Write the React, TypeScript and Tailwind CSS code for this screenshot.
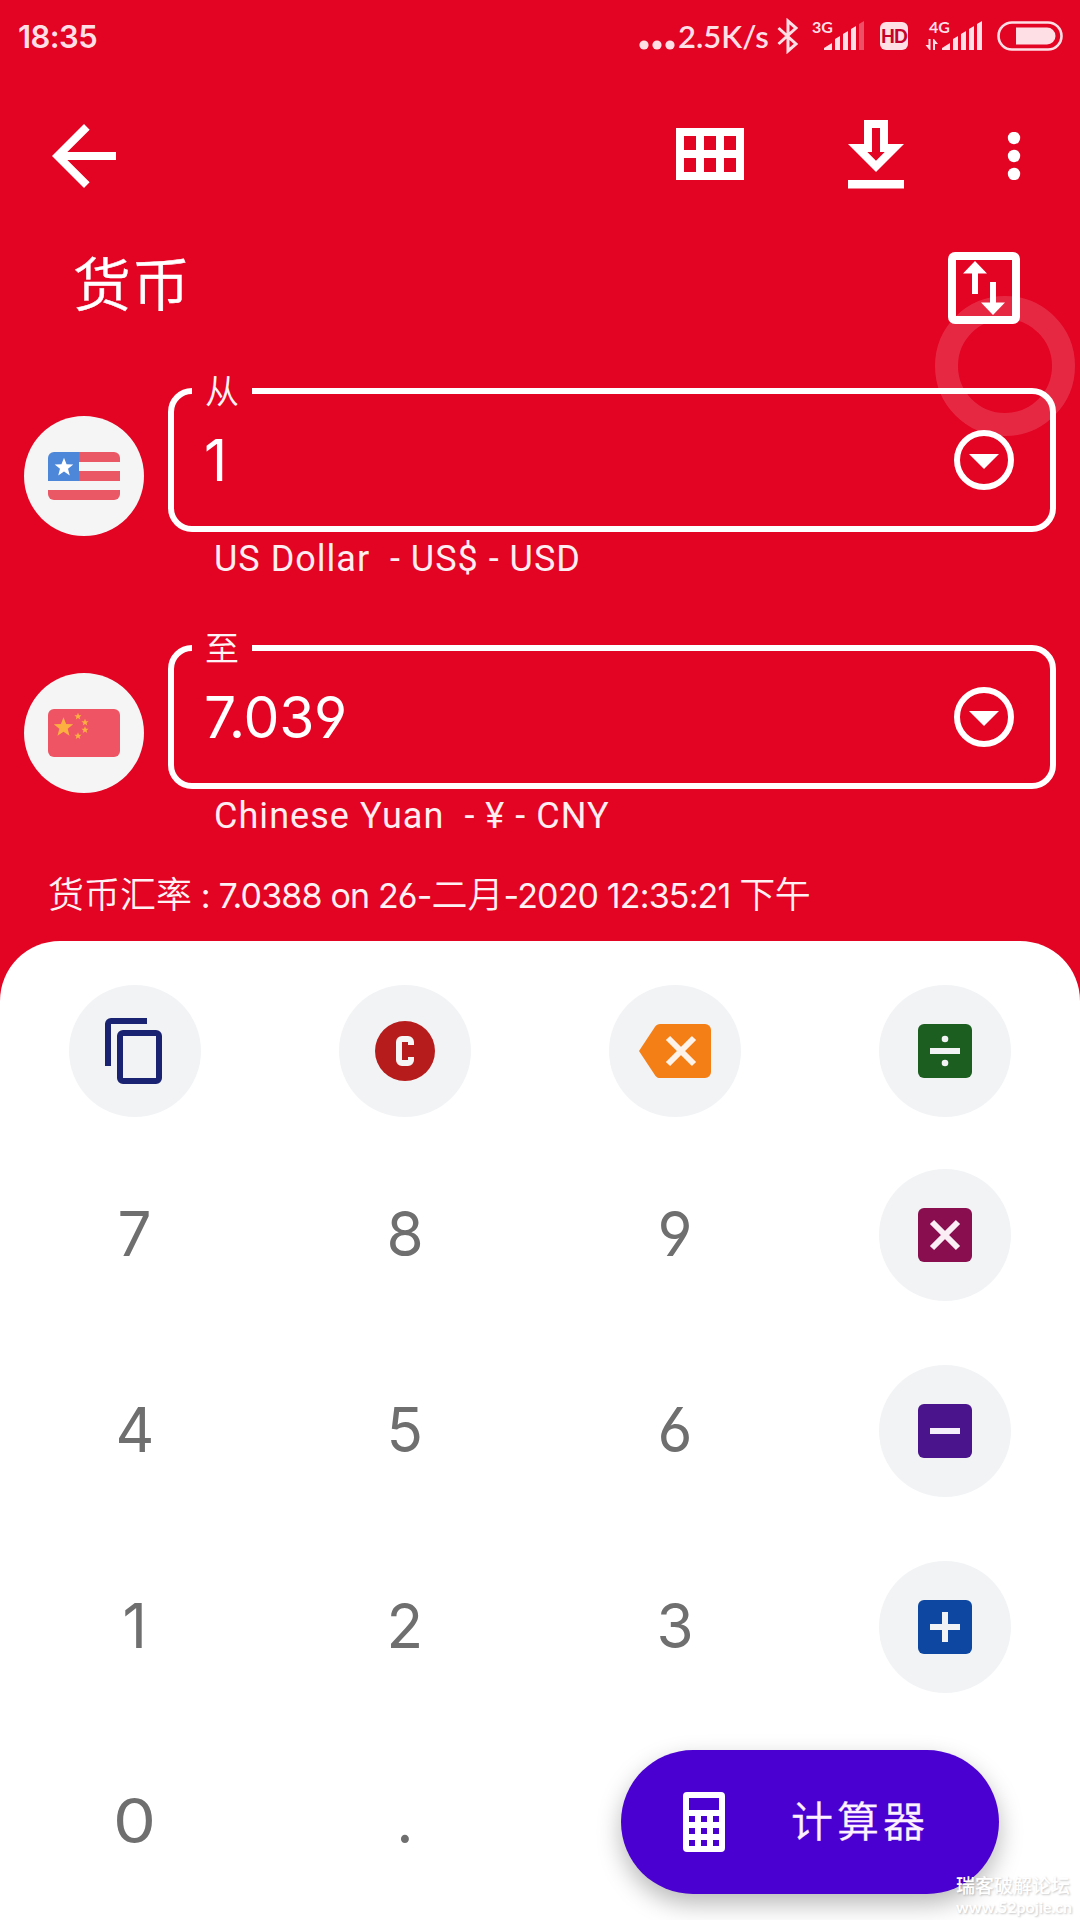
import type { ReactNode } from "react";
import { MdArrowBack } from "react-icons/md";

type FieldProps = {
  label: string;
  value: string;
  unit: string;
  flag: ReactNode;
  unitClass: string;
};

const STAR = "M0-10 2.6-3.4 9.5-3.1 4.1 1.2 5.9 8.1 0 4.2-5.9 8.1-4.1 1.2-9.5-3.1-2.6-3.4Z";

function StatusBar() {
  return (
    <div className="flex h-[72px] shrink-0 items-center justify-between pl-[18px] pr-[17px] text-[#ffdfe6]">
      <span className="mt-[2px] font-[Inter] text-[31px] font-semibold tracking-[-0.6px]">
        18:35
      </span>
      <div className="flex items-center">
        <svg className="mt-[18px] h-[10px] w-9" viewBox="0 0 36 10" fill="currentColor">
          <circle cx="5" cy="5" r="4.6" />
          <circle cx="18" cy="5" r="4.6" />
          <circle cx="31" cy="5" r="4.6" />
        </svg>
        <span className="ml-[3px] w-[96px] whitespace-nowrap font-[Lato] text-[31px] font-semibold">
          2.5K/s
        </span>
        <svg
          className="ml-[3px] h-9 w-[22px]"
          viewBox="0 0 22 36"
          fill="none"
          stroke="currentColor"
          strokeWidth="3"
        >
          <path d="M1.5 10 19 26 11 33V3l8 7L1.5 26" />
        </svg>
        <div className="ml-[13px] flex h-9 w-[54px]">
          <span className="-mt-[1px] w-3 font-[Lato] text-[16px] font-bold leading-[20px]">3G</span>
          <svg className="h-9 w-[42px]" viewBox="12 0 42 36" fill="currentColor">
            <path d="M12 32v-2l8-5v7zM23 32V21l5-3v14zM31 32V16l5-3v19zM39 32V11l5-3v24z" />
            <path d="M47 32V6l5-3v29z" opacity=".35" />
          </svg>
        </div>
        <div className="ml-[14px] flex h-[28px] w-[28px] items-center justify-center rounded-[6px] bg-[#ffdfe6] font-[Lato] text-[18px] font-black leading-none tracking-[-0.8px] text-[#c3032c]">
          HD
        </div>
        <div className="relative ml-[16px] h-9 w-[58px]">
          <span className="absolute -top-[1px] left-[5px] font-[Lato] text-[16px] font-bold leading-[20px] text-[#ffdfe6]">
            4G
          </span>
          <svg className="h-9 w-[58px]" viewBox="0 0 58 36" fill="currentColor">
            <path d="M4.5 21h2v11h-1l-4-5h3zM9 21h1l4 5h-3v6H9z" />
            <path d="M18 32v-2l8-5v7zM29 32V21l5-3v14zM37 32V16l5-3v19zM45 32V11l5-3v24zM53 32V6l5-3v29z" />
          </svg>
        </div>
        <svg className="ml-[15px] h-[30px] w-[66px]" viewBox="0 0 66 30">
          <rect x="1.5" y="1.5" width="63" height="27" rx="13.5" fill="none" stroke="currentColor" strokeWidth="2.6" />
          <path d="M19 6.5h31a8.5 8.5 0 0 1 0 17H19z" fill="currentColor" />
        </svg>
      </div>
    </div>
  );
}

function Toolbar() {
  return (
    <div className="mt-9 flex h-24 shrink-0 items-center pl-[36px] pr-[42px] text-white">
      <MdArrowBack className="h-24 w-24" />
      <svg className="ml-auto mb-1 h-[52px] w-[68px]" viewBox="0 0 68 52" fill="currentColor">
        <path
          fillRule="evenodd"
          d="M0 0h68v52H0zM8 8v14h12V8zM28 8v14h12V8zM48 8v14h12V8zM8 30v14h12V30zM28 30v14h12V30zM48 30v14h12V30z"
        />
      </svg>
      <svg className="ml-[84px] h-24 w-24" viewBox="0 0 24 24" fill="currentColor">
        <path d="M19 9h-4V3H9v6H5l7 7 7-7zm-8 2V5h2v6h1.17L12 13.17 9.83 11H11zM5 18h14v2.1H5z" />
      </svg>
      <svg className="ml-[66px] h-12 w-12" viewBox="0 0 48 48" fill="currentColor">
        <circle cx="24" cy="6" r="6.2" />
        <circle cx="24" cy="24" r="6.2" />
        <circle cx="24" cy="42" r="6.2" />
      </svg>
    </div>
  );
}

function UsFlag() {
  return (
    <svg className="h-12 w-[72px]" viewBox="0 0 72 48">
      <clipPath id="us">
        <rect width="72" height="48" rx="6" />
      </clipPath>
      <g clipPath="url(#us)">
        <path fill="#f5f5f5" d="M0 0h72v48H0z" />
        <path fill="#ea5765" d="M30 0h42v10H30zM30 19h42v10H30zM0 38h72v10H0z" />
        <path fill="#4c87d9" d="M0 0h31v29H0z" />
      </g>
      <path d={STAR} fill="#fff" transform="translate(16 15.5) scale(.98)" />
    </svg>
  );
}

function CnFlag() {
  return (
    <svg className="h-12 w-[72px]" viewBox="0 0 72 48">
      <rect width="72" height="48" rx="6" fill="#ee5464" />
      <g fill="#fbb040">
        <path d={STAR} transform="translate(15.5 18.5) scale(1.02)" />
        <path d={STAR} transform="translate(30 7.5) scale(.38)" />
        <path d={STAR} transform="translate(37 13.5) scale(.38)" />
        <path d={STAR} transform="translate(37 21) scale(.38)" />
        <path d={STAR} transform="translate(30 27) scale(.38)" />
      </g>
    </svg>
  );
}

function CurrencyField({ label, value, unit, flag, unitClass }: FieldProps) {
  return (
    <div className="flex h-[257px] items-start pl-6 pr-6">
      <div className="mt-7 flex h-[120px] w-[120px] items-center justify-center rounded-full bg-[#f5f5f5]">
        {flag}
      </div>
      <div className="ml-6 flex-1">
        <div className="relative flex h-36 items-center justify-between rounded-[24px] border-[6px] border-white pl-[30px] pr-[36px]">
          <span className="absolute -top-[24px] left-[18px] flex h-10 w-[60px] items-center justify-center bg-[#e30322] font-['Noto_Sans_CJK_SC',sans-serif] text-[34px] font-[350] leading-none text-[#fff3f6]">
            {label}
          </span>
          <span className="font-[Inter] text-[57px] leading-none tracking-[-0.3px] text-white [font-feature-settings:'cv03','cv04']">
            {value}
          </span>
          <svg className="h-[60px] w-[60px]" viewBox="0 0 60 60">
            <circle cx="30" cy="30" r="27" fill="none" stroke="#fff" strokeWidth="6" />
            <path d="M15 24h30L30 39z" fill="#fff" />
          </svg>
        </div>
        <p
          className={`ml-[46px] mt-[5px] whitespace-pre font-[Roboto] text-[36px] leading-[44px] text-[#ffedf1] ${unitClass}`}
        >
          {unit}
        </p>
      </div>
    </div>
  );
}

function KeyIcon({ color, children }: { color: string; children: ReactNode }) {
  return (
    <div className="flex h-[132px] w-[132px] items-center justify-center rounded-full bg-[#f1f3f5]">
      <svg className="h-[72px] w-[72px]" viewBox="0 0 72 72" fill={color}>
        {children}
      </svg>
    </div>
  );
}

const box = <rect x="9" y="9" width="54" height="54" rx="6" />;

const keys: { id: string; icon?: ReactNode }[][] = [
  [
    {
      id: "copy",
      icon: (
        <KeyIcon color="#1a2272">
          <path d="M48 3H12a6 6 0 0 0-6 6v42h6V9h36zm9 12H24a6 6 0 0 0-6 6v42a6 6 0 0 0 6 6h33a6 6 0 0 0 6-6V21a6 6 0 0 0-6-6zm0 48H24V21h33z" />
        </KeyIcon>
      ),
    },
    {
      id: "clear",
      icon: (
        <KeyIcon color="#b71c1c">
          <circle cx="36" cy="36" r="30" />
          <path
            d="M42 30v-3a3 3 0 0 0-3-3h-6a3 3 0 0 0-3 3v18a3 3 0 0 0 3 3h6a3 3 0 0 0 3-3v-3"
            fill="none"
            stroke="#f5f5f5"
            strokeWidth="6"
          />
        </KeyIcon>
      ),
    },
    {
      id: "backspace",
      icon: (
        <KeyIcon color="#f57f17">
          <path d="M66 9H21c-2 0-3.7 1-4.8 2.6L0 36l16.200 24.400C17.300 62 19 63 21 63h45a6 6 0 0 0 6-6V15a6 6 0 0 0-6-6z" />
          <path d="m29 23 26 26m0-26L29 49" stroke="#fdf3ea" strokeWidth="6" />
        </KeyIcon>
      ),
    },
    {
      id: "divide",
      icon: (
        <KeyIcon color="#1b5e20">
          {box}
          <path d="M21 36h30" stroke="#f1f3f5" strokeWidth="6" />
          <circle cx="36" cy="24" r="3.3" fill="#f1f3f5" />
          <circle cx="36" cy="48" r="3.3" fill="#f1f3f5" />
        </KeyIcon>
      ),
    },
  ],
  [
    { id: "7" },
    { id: "8" },
    { id: "9" },
    {
      id: "multiply",
      icon: (
        <KeyIcon color="#880e4f">
          {box}
          <path d="m23 23 26 26m0-26L23 49" stroke="#fbeef5" strokeWidth="6" />
        </KeyIcon>
      ),
    },
  ],
  [
    { id: "4" },
    { id: "5" },
    { id: "6" },
    {
      id: "minus",
      icon: (
        <KeyIcon color="#4a148c">
          {box}
          <path d="M21 36h30" stroke="#f5eefb" strokeWidth="6" />
        </KeyIcon>
      ),
    },
  ],
  [
    { id: "1" },
    { id: "2" },
    { id: "3" },
    {
      id: "plus",
      icon: (
        <KeyIcon color="#0d47a1">
          {box}
          <path d="M21 36h30M36 21v30" stroke="#f1f3f5" strokeWidth="6" />
        </KeyIcon>
      ),
    },
  ],
];

function Digit({ children }: { children: string }) {
  return (
    <span
      className={`mb-[2px] font-[Inter] text-[62px] leading-none text-[#6f6f6f] [font-feature-settings:'cv03','cv04'] ${
        children === "0" ? "scale-x-110" : "scale-x-[.97]"
      }`}
    >
      {children}
    </span>
  );
}

export default function App() {
  return (
    <div className="relative flex h-[1920px] w-[1080px] flex-col overflow-hidden bg-[#e30322]">
      <StatusBar />
      <Toolbar />

      <div className="mt-12 flex h-[72px] shrink-0 items-center justify-between pl-[73px] pr-[60px]">
        <h1 className="mt-[-14px] font-['Noto_Sans_CJK_SC',sans-serif] text-[58px] font-[350] leading-none tracking-[1px] text-white [-webkit-text-stroke:0.4px]">
          货币
        </h1>
        <svg className="h-[72px] w-[72px]" viewBox="0 0 72 72" fill="#fff">
          <rect x="4" y="4" width="64" height="64" rx="3" fill="none" stroke="#fff" strokeWidth="8" />
          <path d="M27 9l12 12.5h-9V42h-6V21.5h-9zM45 63 33 50.5h9V30h6v20.5h9z" />
        </svg>
      </div>

      <div className="mt-16 shrink-0">
        <CurrencyField
          label="从"
          value="1"
          unit="US Dollar  - US$ - USD"
          flag={<UsFlag />}
          unitClass="tracking-[1px]"
        />
        <CurrencyField
          label="至"
          value="7.039"
          unit="Chinese Yuan  - ¥ - CNY"
          flag={<CnFlag />}
          unitClass="tracking-[1.05px]"
        />
      </div>

      <p className="-mt-[33px] h-[72px] shrink-0 whitespace-nowrap pl-12 pt-[2px] font-[Inter,'Noto_Sans_CJK_SC',sans-serif] text-[34px] leading-[48px] tracking-[-0.85px] text-[#fff0f4] [font-feature-settings:'cv03','cv04']">
        <span className="text-[36px] font-[350] tracking-normal">货币汇率</span>{" "}
        : 7.0388 on 26-
        <span className="text-[36px] font-[350] tracking-normal">二月</span>
        -2020 12:35:21{" "}
        <span className="text-[36px] font-[350] tracking-[-0.5px]">下午</span>
      </p>

      <div className="flex flex-1 flex-col rounded-t-[60px] bg-white">
        {keys.map((row, i) => (
          <div
            key={i}
            className={`grid h-[196px] shrink-0 grid-cols-4 justify-items-center ${
              i === 0 ? "items-start pt-[44px]" : "items-center"
            }`}
          >
            {row.map((k) => (k.icon ? <div key={k.id}>{k.icon}</div> : <Digit key={k.id}>{k.id}</Digit>))}
          </div>
        ))}
        <div className="grid h-[194px] grid-cols-4 place-items-center">
          <Digit>0</Digit>
          <Digit>.</Digit>
          <button className="col-span-2 flex h-36 w-[378px] items-center rounded-full bg-[#4a00d0] pl-[62px] text-[#fdf0ff] shadow-[0_10px_24px_rgba(0,0,0,0.28)]">
            <svg className="h-[60px] w-[42px]" viewBox="0 0 42 60" fill="#fff">
              <path
                fillRule="evenodd"
                d="M4 0h34a4 4 0 0 1 4 4v52a4 4 0 0 1-4 4H4a4 4 0 0 1-4-4V4a4 4 0 0 1 4-4zM6 6v12h30V6zM6 24v6h6v-6zM18 24v6h6v-6zM30 24v6h6v-6zM6 36v6h6v-6zM18 36v6h6v-6zM30 36v6h6v-6zM6 48v6h6v-6zM18 48v6h6v-6zM30 48v6h6v-6z"
              />
            </svg>
            <span className="ml-[66px] mb-[6px] font-['Noto_Sans_CJK_SC',sans-serif] text-[42px] font-[350] leading-none tracking-[4px] [-webkit-text-stroke:0.3px]">
              计算器
            </span>
          </button>
        </div>
      </div>

      {/* floating assist ring */}
      <div className="absolute left-[935px] top-[296px] h-[140px] w-[140px] rounded-full border-[23px] border-white/15" />

      {/* watermark */}
      <div className="absolute right-2 bottom-[4px] w-[116px] whitespace-nowrap font-['Noto_Sans_CJK_SC',sans-serif] text-white [text-shadow:1px_1px_2px_rgba(0,0,0,0.22)]">
        <p className="text-[19px] font-medium leading-[26px]">瑞客破解论坛</p>
        <p className="font-[Lato] text-[16px] font-bold leading-[18px]">www.52pojie.cn</p>
      </div>
    </div>
  );
}
